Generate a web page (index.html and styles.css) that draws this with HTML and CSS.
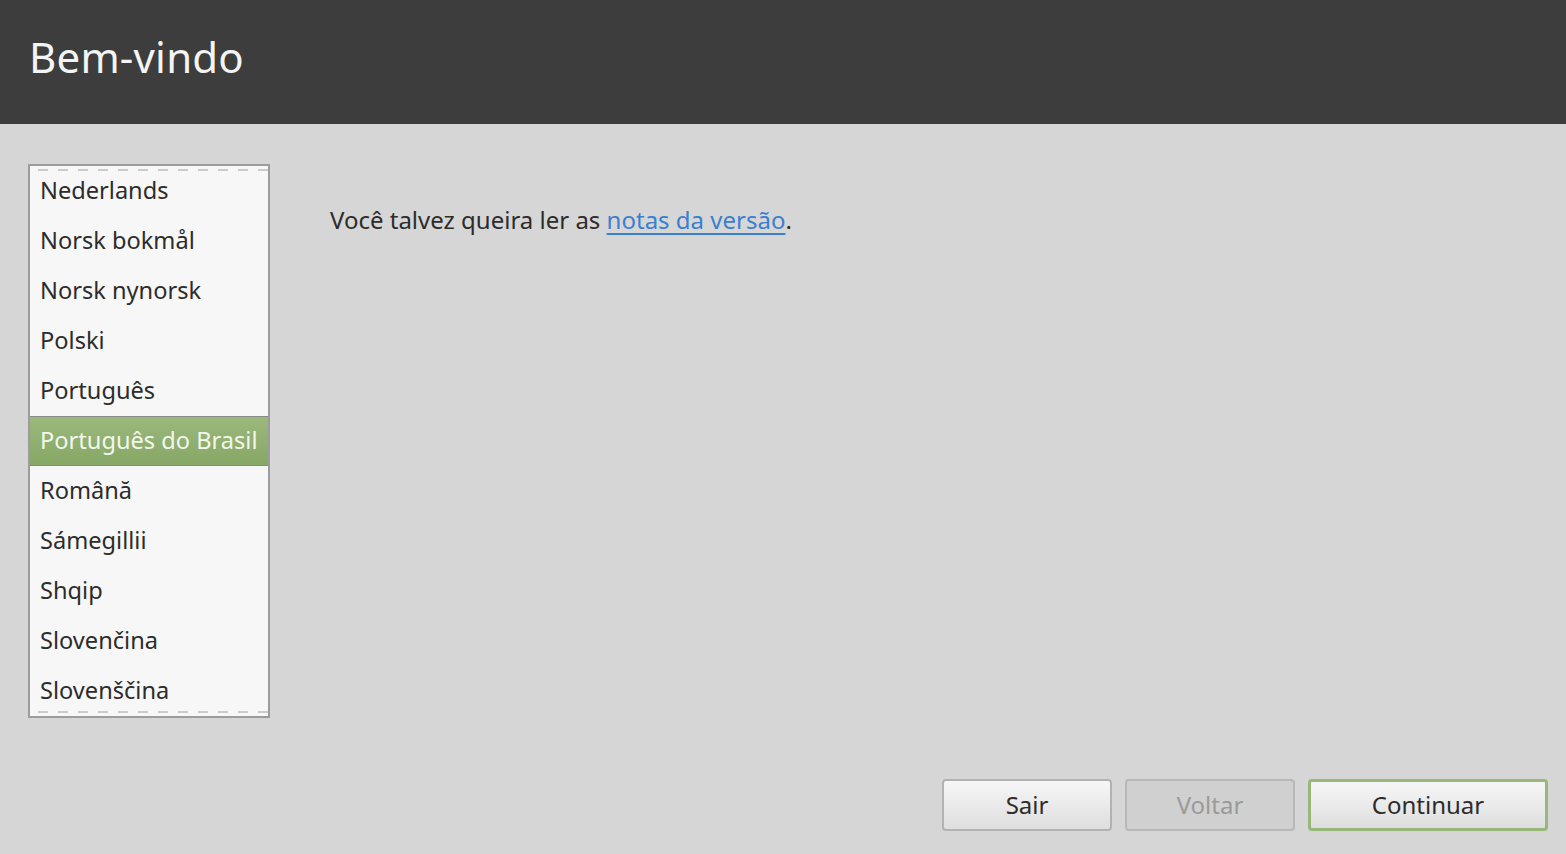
FILE: index.html
```html
<!DOCTYPE html>
<html lang="pt-BR">
<head>
<meta charset="utf-8">
<title>Bem-vindo</title>
<link rel="stylesheet" href="styles.css">
</head>
<body>
<div class="window">
  <header class="header">
    <h1 class="title">Bem-vindo</h1>
  </header>
  <main class="main">
    <div class="langlist">
      <div class="undershoot top"></div>
      <div class="row">Nederlands</div>
      <div class="row">Norsk bokmål</div>
      <div class="row">Norsk nynorsk</div>
      <div class="row">Polski</div>
      <div class="row">Português</div>
      <div class="row selected">Português do Brasil</div>
      <div class="row">Română</div>
      <div class="row">Sámegillii</div>
      <div class="row">Shqip</div>
      <div class="row">Slovenčina</div>
      <div class="row">Slovenščina</div>
      <div class="undershoot bottom"></div>
    </div>
    <div class="info">
      <p class="notes">Você talvez queira ler as <a class="link" href="#">notas da versão</a>.</p>
    </div>
  </main>
  <footer class="footer">
    <button class="btn">Sair</button>
    <button class="btn disabled">Voltar</button>
    <button class="btn default">Continuar</button>
  </footer>
</div>
</body>
</html>
```

FILE: styles.css
```css
* { box-sizing: border-box; }
html, body { margin: 0; padding: 0; }
body {
  width: 1566px;
  height: 854px;
  overflow: hidden;
  background: #d6d6d6;
  font-family: "Noto Sans", "DejaVu Sans", sans-serif;
  color: #2e2e2e;
}
.window {
  display: flex;
  flex-direction: column;
  height: 854px;
}
.header {
  height: 124px;
  background: #3d3d3d;
  display: flex;
  align-items: center;
  padding-left: 29px;
  padding-bottom: 12px;
}
.title {
  margin: 0;
  font-weight: normal;
  font-size: 42px;
  color: #f4f4f4;
  letter-spacing: 0.2px;
}
.main {
  flex: 1;
  display: flex;
  align-items: flex-start;
  padding: 40px 0 0 28px;
}
.langlist {
  position: relative;
  width: 242px;
  border: 2px solid #9c9c9c;
  background: #f7f7f7;
  display: flex;
  flex-direction: column;
}
.row {
  height: 50px;
  display: flex;
  align-items: center;
  padding-left: 10px;
  padding-bottom: 2px;
  font-size: 23.6px;
  color: #2c2c2c;
  white-space: nowrap;
}
.row.selected {
  background: linear-gradient(#9ab97b, #87a766);
  border-top: 1px solid #8a8a8a;
  border-bottom: 1px solid #8a8a8a;
  color: #f3f6ef;
}
.undershoot {
  position: absolute;
  left: 8px;
  right: 0;
  height: 2px;
  background: repeating-linear-gradient(90deg, #cbcbcb 0 10px, transparent 10px 20px);
}
.undershoot.top { top: 3px; }
.undershoot.bottom { bottom: 3px; }
.info {
  padding-left: 60px;
  padding-top: 39px;
}
.notes {
  margin: 0;
  font-size: 24px;
  color: #2c2c2c;
}
.link {
  color: #3a7fd0;
  text-decoration: underline;
  text-decoration-thickness: 2px;
  text-underline-offset: 4px;
}
.footer {
  height: 75px;
  display: flex;
  justify-content: flex-end;
  align-items: flex-start;
  gap: 13px;
  padding-right: 18px;
}
.btn {
  height: 52px;
  width: 170px;
  font-family: "Noto Sans", "DejaVu Sans", sans-serif;
  font-size: 24px;
  color: #2c2c2c;
  background: linear-gradient(#f6f6f6, #dedede);
  border: 2px solid #b2b2b2;
  border-radius: 4px;
  padding: 0 0 2px;
}
.btn.disabled {
  background: #d0d0d0;
  color: #9a9a9a;
  border-color: #b8b8b8;
}
.btn.default {
  width: 240px;
  border: 3px solid #97b878;
}
```
